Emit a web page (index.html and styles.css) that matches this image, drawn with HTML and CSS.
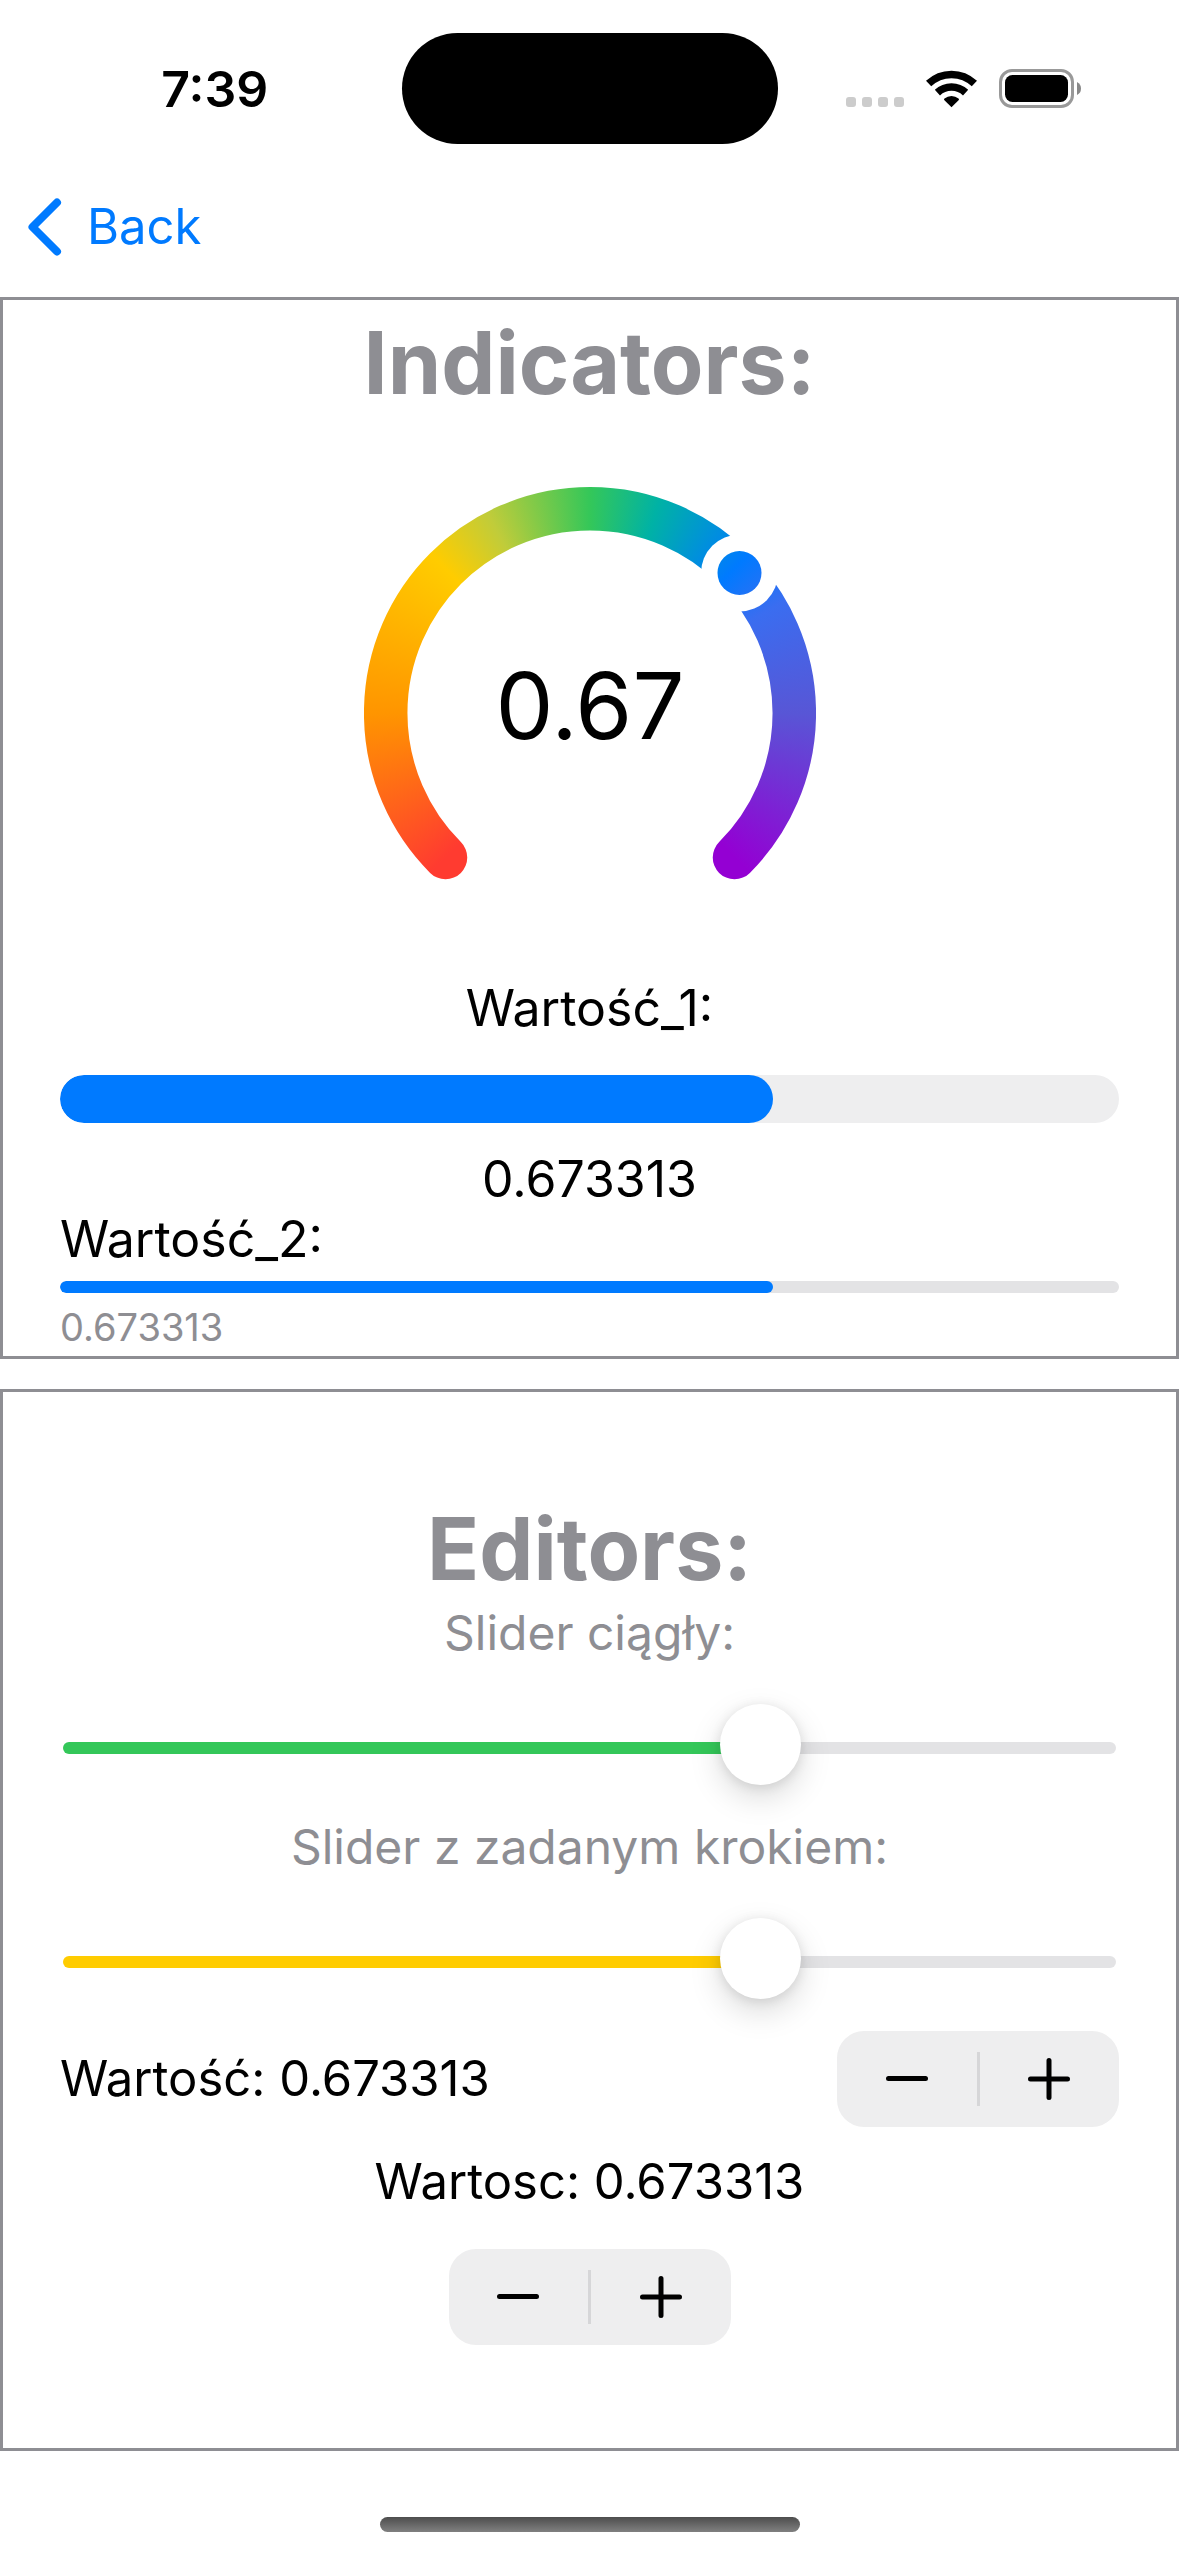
FILE: index.html
```html
<!DOCTYPE html>
<html lang="pl">
<head>
<meta charset="utf-8">
<meta name="viewport" content="width=device-width, initial-scale=1">
<title>Indicators</title>
<link rel="stylesheet" href="styles.css">
</head>
<body>
<div class="screen">
  <header class="top">
    <div class="status">
      <time class="clock">7:39</time>
      <div class="island"></div>
      <div class="status-icons">
        <svg class="icon-cell" viewBox="0 0 58 38" aria-hidden="true">
          <rect x="0" y="27" width="10" height="10" rx="3"/>
          <rect x="16" y="27" width="10" height="10" rx="3"/>
          <rect x="32" y="27" width="10" height="10" rx="3"/>
          <rect x="48" y="27" width="10" height="10" rx="3"/>
        </svg>
        <svg class="icon-wifi" viewBox="0 0 51 38" aria-hidden="true">
          <path class="wave" d="M2.6 13.6A33.2 33.2 0 0 1 48.4 13.6"/>
          <path class="wave" d="M11.4 22.6A20.7 20.7 0 0 1 39.6 22.6"/>
          <path d="M25.5 37.3L18.2 30Q17.6 29.2 18.5 28.4A11 11 0 0 1 32.5 28.4Q33.4 29.2 32.8 30Z"/>
        </svg>
        <svg class="icon-battery" viewBox="0 0 82 39" aria-hidden="true">
          <rect class="shell" x="1.5" y="1.5" width="72" height="36" rx="11.5"/>
          <rect x="6" y="6" width="63" height="27" rx="7.5"/>
          <path class="nub" d="M78 13Q82 15 82 19.500Q82 24 78 26Z"/>
        </svg>
      </div>
    </div>
    <nav class="nav">
      <a class="back" href="#">
        <svg class="icon-back" viewBox="0 0 34 58" aria-hidden="true"><path d="M29 4.500L4.500 29L29 53.500"/></svg>
        Back
      </a>
    </nav>
  </header>

  <main class="panels">
    <section class="panel panel-indicators">
      <h2 class="title">Indicators:</h2>
      <svg class="gauge" viewBox="0 0 452 394" role="meter" aria-label="0.67" aria-valuemin="0" aria-valuemax="1" aria-valuenow="0.67">
        <mask id="arc" maskUnits="userSpaceOnUse" x="0" y="0" width="452" height="394">
          <path class="arc" d="M81.500 370.500A204.300 204.300 0 1 1 370.500 370.500"/>
          <circle cx="375.500" cy="86" r="38.500" fill="#000"/>
          <circle cx="375.500" cy="86" r="22" fill="#fff"/>
        </mask>
        <g mask="url(#arc)">
          <foreignObject width="452" height="452"><div class="spectrum"></div></foreignObject>
        </g>
        <text class="gauge-value" x="226" y="252">0.67</text>
      </svg>

      <div class="meter">
        <label class="meter-label" for="value-1">Wartość_1:</label>
        <progress class="bar bar-thick" id="value-1" value="0.673313" max="1"></progress>
        <output class="meter-value" for="value-1">0.673313</output>
      </div>
      <div class="linear">
        <label for="value-2">Wartość_2:</label>
        <progress class="bar" id="value-2" value="0.673313" max="1"></progress>
        <output class="caption" for="value-2">0.673313</output>
      </div>
    </section>

    <section class="panel">
      <h2 class="title">Editors:</h2>
      <div class="slider-field">
        <label for="smooth">Slider ciągły:</label>
        <input class="slider slider-green" id="smooth" type="range" min="0" max="1" step="any" value="0.676">
      </div>
      <div class="slider-field">
        <label for="stepped">Slider z zadanym krokiem:</label>
        <input class="slider slider-yellow" id="stepped" type="range" min="0" max="1" step="any" value="0.676">
      </div>
      <div class="stepper-row">
        <span id="stepper-a">Wartość: 0.673313</span>
        <div class="stepper" role="group" aria-labelledby="stepper-a">
          <button type="button" aria-label="Decrement"><svg viewBox="0 0 42 42"><path d="M2.500 20.500H39.500"/></svg></button>
          <span class="divider"></span>
          <button type="button" aria-label="Increment"><svg viewBox="0 0 42 42"><path d="M2.500 21H39.500M21 2.500V39.500"/></svg></button>
        </div>
      </div>
      <div class="stepper-stack">
        <span id="stepper-b">Wartosc: 0.673313</span>
        <div class="stepper" role="group" aria-labelledby="stepper-b">
          <button type="button" aria-label="Decrement"><svg viewBox="0 0 42 42"><path d="M2.500 20.500H39.500"/></svg></button>
          <span class="divider"></span>
          <button type="button" aria-label="Increment"><svg viewBox="0 0 42 42"><path d="M2.500 21H39.500M21 2.500V39.500"/></svg></button>
        </div>
      </div>
    </section>
  </main>

  <footer class="home"><div class="home-bar"></div></footer>
</div>
</body>
</html>
```
FILE: styles.css
```css
* {
  box-sizing: border-box;
}

:root {
  --blue: #007aff;
  --gray: #8e8e93;
  --fill: #eeeeef;
  --track: #e3e3e5;
}

body {
  margin: 0;
  background: #fff;
  color: #000;
  font: 400 50px/60px Inter, "Liberation Sans", sans-serif;
}

.screen {
  display: flex;
  flex-direction: column;
  min-height: 100vh;
}

/* Status bar and navigation */
.status {
  display: grid;
  grid-template-columns: 1fr 376px 1fr;
  align-items: center;
  height: 177px;
}

.clock {
  padding-left: 28px;
  text-align: center;
  font-weight: 600;
}

.island {
  height: 111px;
  border-radius: 56px;
  background: #000;
}

.status-icons {
  display: flex;
  justify-content: center;
  align-items: center;
  gap: 22px;
  padding-right: 30px;
}

.icon-cell {
  width: 58px;
  height: 38px;
  fill: #ccc;
}

.icon-wifi {
  width: 51px;
  height: 38px;
}

.wave {
  fill: none;
  stroke: #000;
  stroke-width: 7.6;
}

.icon-battery {
  width: 82px;
  height: 39px;
}

.shell {
  fill: none;
  stroke: #999;
  stroke-width: 3;
}

.nub {
  fill: #888;
}

.nav {
  height: 120px;
  padding: 0 28px 20px;
  display: flex;
}

.back {
  display: flex;
  align-items: center;
  gap: 25px;
  color: var(--blue);
  font-size: 49px;
  text-decoration: none;
}

.icon-back {
  width: 34px;
  height: 58px;
  fill: none;
  stroke: currentColor;
  stroke-width: 8;
  stroke-linecap: round;
  stroke-linejoin: round;
}

/* Panels */
.panels {
  flex: 1;
  display: grid;
  grid-auto-rows: 1fr;
  gap: 30px;
}

.panel {
  display: flex;
  flex-direction: column;
  justify-content: center;
  padding: 0 57px;
  border: 3px solid var(--gray);
}

.panel-indicators {
  padding-top: 3px;
}

.title {
  margin: 0;
  color: var(--gray);
  font-size: 86px;
  font-weight: 700;
  line-height: 108px;
  text-align: center;
}

/* Circular gauge */
.gauge {
  align-self: center;
  width: 452px;
  height: 394px;
  margin: 70px 0 97px;
}

.arc {
  fill: none;
  stroke: #fff;
  stroke-width: 43.5;
  stroke-linecap: round;
}

.spectrum {
  height: 452px;
  background: conic-gradient(from 225deg, #ff3b30 0deg, #ff9500 45deg, #fc0 90deg, #c0cc3a 108deg, #34c759 135deg, #00b2a5 153deg, #007aff 180deg, #3a6df0 195deg, #5856d6 225deg, #9400d3 270deg 315deg, #ff3b30 315deg);
}

.gauge-value {
  font-size: 92px;
  text-anchor: middle;
}

/* Progress bars */
.meter,
.linear {
  display: flex;
  flex-direction: column;
}

.meter {
  text-align: center;
}

.meter-label {
  margin-bottom: 37px;
}

.meter-value {
  margin-top: 26px;
}

.bar {
  appearance: none;
  display: block;
  width: 100%;
  height: 12px;
  border: 0;
  border-radius: 6px;
  background: var(--track);
  overflow: hidden;
}

.bar::-webkit-progress-bar {
  background: var(--track);
}

.bar::-webkit-progress-value {
  border-radius: 6px;
  background: var(--blue);
}

.bar-thick {
  height: 48px;
  border-radius: 24px;
}

.bar-thick::-webkit-progress-bar {
  background: var(--fill);
}

.bar-thick::-webkit-progress-value {
  border-radius: 24px;
}

.linear .bar {
  margin: 12px 0 10px;
}

.caption {
  color: var(--gray);
  font-size: 38px;
  line-height: 48px;
}

/* Sliders */
.slider-field {
  display: flex;
  flex-direction: column;
  gap: 43px;
  margin-bottom: 27px;
  color: var(--gray);
  font-size: 48px;
  text-align: center;
}

.slider {
  appearance: none;
  height: 84px;
  margin: 0 3px;
  background: none;
}

.slider::-webkit-slider-runnable-track {
  height: 12px;
  border-radius: 6px;
  background: linear-gradient(to right, var(--tint) 67%, var(--track) 67%);
}

.slider::-webkit-slider-thumb {
  appearance: none;
  width: 81px;
  height: 81px;
  margin-top: -38px;
  border-radius: 50%;
  background: #fff;
  box-shadow: 0 12px 32px rgba(0, 0, 0, .15), 0 2px 12px rgba(0, 0, 0, .1);
}

.slider-green {
  --tint: #34c759;
}

.slider-yellow {
  --tint: #fc0;
}

/* Steppers */
.stepper-row {
  display: flex;
  justify-content: space-between;
  align-items: center;
  font-size: 49px;
}

.stepper-stack {
  display: flex;
  flex-direction: column;
  align-items: center;
  gap: 37px;
  margin-top: 25px;
  font-size: 49px;
}

.stepper {
  display: flex;
  align-items: center;
  width: 282px;
  height: 96px;
  border-radius: 27px;
  background: var(--fill);
}

.stepper button {
  flex: 1;
  display: flex;
  justify-content: center;
  align-items: center;
  height: 100%;
  padding: 0;
  border: 0;
  background: none;
}

.stepper svg {
  width: 42px;
  height: 42px;
  stroke: #000;
  stroke-width: 5;
  stroke-linecap: round;
}

.divider {
  width: 3px;
  height: 54px;
  background: #d6d6d8;
}

/* Home indicator */
.home {
  display: flex;
  justify-content: center;
  padding: 66px 0 24px;
}

.home-bar {
  width: 420px;
  height: 15px;
  border-radius: 8px;
  background: linear-gradient(#4d4d4d, #808080);
}
```
